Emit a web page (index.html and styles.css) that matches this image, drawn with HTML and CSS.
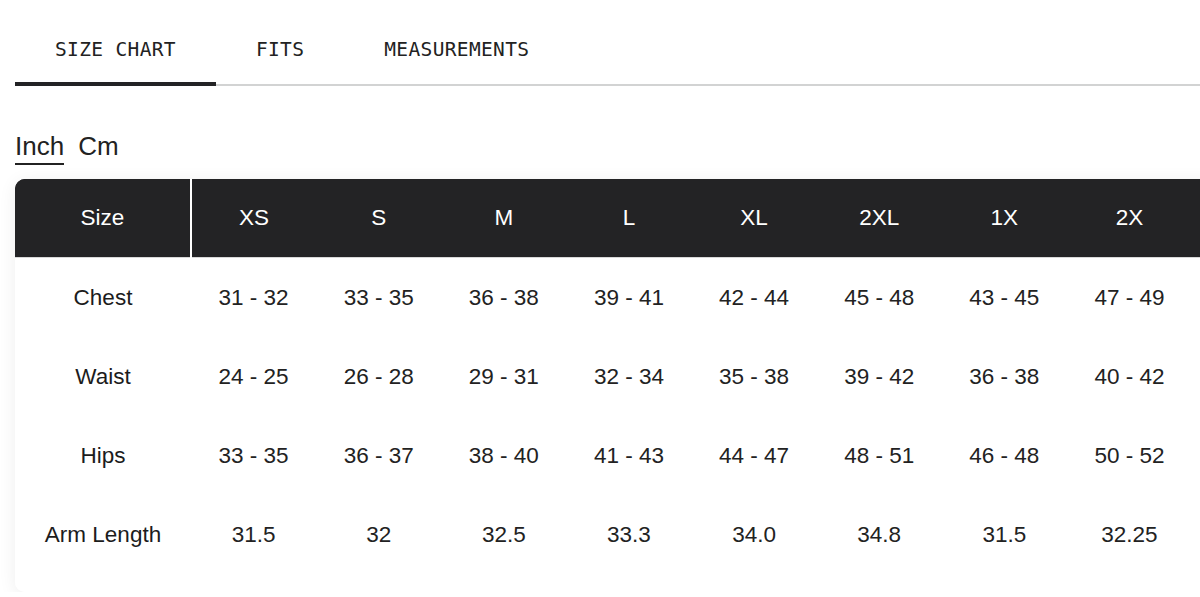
FILE: index.html
```html
<!DOCTYPE html>
<html>
<head>
<meta charset="utf-8">
<link rel="stylesheet" href="styles.css">
</head>
<body>
<div class="page">
  <nav class="tabs">
    <div class="tab active">SIZE CHART</div>
    <div class="tab">FITS</div>
    <div class="tab">MEASUREMENTS</div>
  </nav>
  <div class="units">
    <span class="unit active">Inch</span>
    <span class="unit">Cm</span>
  </div>
  <div class="card">
    <table class="chart">
      <colgroup>
        <col class="c-label">
        <col class="c-size"><col class="c-size"><col class="c-size"><col class="c-size">
        <col class="c-size"><col class="c-size"><col class="c-size"><col class="c-size">
      </colgroup>
      <thead>
        <tr>
          <th class="label-head">Size</th>
          <th>XS</th><th>S</th><th>M</th><th>L</th><th>XL</th><th>2XL</th><th>1X</th><th>2X</th>
        </tr>
      </thead>
      <tbody>
        <tr><td class="label">Chest</td><td>31 - 32</td><td>33 - 35</td><td>36 - 38</td><td>39 - 41</td><td>42 - 44</td><td>45 - 48</td><td>43 - 45</td><td>47 - 49</td></tr>
        <tr><td class="label">Waist</td><td>24 - 25</td><td>26 - 28</td><td>29 - 31</td><td>32 - 34</td><td>35 - 38</td><td>39 - 42</td><td>36 - 38</td><td>40 - 42</td></tr>
        <tr><td class="label">Hips</td><td>33 - 35</td><td>36 - 37</td><td>38 - 40</td><td>41 - 43</td><td>44 - 47</td><td>48 - 51</td><td>46 - 48</td><td>50 - 52</td></tr>
        <tr><td class="label">Arm Length</td><td>31.5</td><td>32</td><td>32.5</td><td>33.3</td><td>34.0</td><td>34.8</td><td>31.5</td><td>32.25</td></tr>
      </tbody>
    </table>
  </div>
</div>
</body>
</html>
```
FILE: styles.css
```css
html, body {
  margin: 0;
  padding: 0;
  background: #ffffff;
  overflow: hidden;
}
.page {
  padding: 20px 0 0 15px;
  font-family: "Liberation Sans", Arial, sans-serif;
  color: #222222;
}
.tabs {
  display: flex;
  border-bottom: 2px solid #d2d3d3;
}
.tab {
  font-family: "DejaVu Sans Mono", "Liberation Mono", monospace;
  font-size: 19.5px;
  letter-spacing: 0.35px;
  line-height: 22px;
  white-space: nowrap;
  padding: 19px 40px 21px 40px;
  color: #222222;
  margin-bottom: -2px;
  border-bottom: 4px solid transparent;
}
.tab.active {
  border-bottom-color: #232325;
}
.units {
  display: flex;
  gap: 14px;
  margin-top: 45px;
  font-size: 26px;
  line-height: 30px;
}
.unit.active {
  border-bottom: 2px solid #222222;
  padding-bottom: 2px;
}
.card {
  margin-top: 14px;
  width: 1220px;
  background: linear-gradient(#232325 0, #232325 78px, #d8d8d8 78px, #d8d8d8 79px, #ffffff 79px);
  border-radius: 10px;
  overflow: hidden;
  padding-bottom: 18px;
  box-shadow: 0 3px 18px rgba(0, 0, 0, 0.07);
}
.chart {
  border-collapse: collapse;
  table-layout: fixed;
  width: 1177px;
  font-size: 22.5px;
}
.c-label { width: 176px; }
.c-size { width: 125.125px; }
.chart th {
  background: #232325;
  color: #ffffff;
  font-weight: normal;
  height: 78px;
  padding: 0;
  text-align: center;
  border-bottom: 1px solid #d8d8d8;
}
.chart th.label-head {
  border-right: 2px solid #ffffff;
}
.chart td {
  height: 79px;
  padding: 0;
  text-align: center;
  color: #222222;
  background: #ffffff;
}
.chart td.label {
  color: #1c1c1c;
}
```
